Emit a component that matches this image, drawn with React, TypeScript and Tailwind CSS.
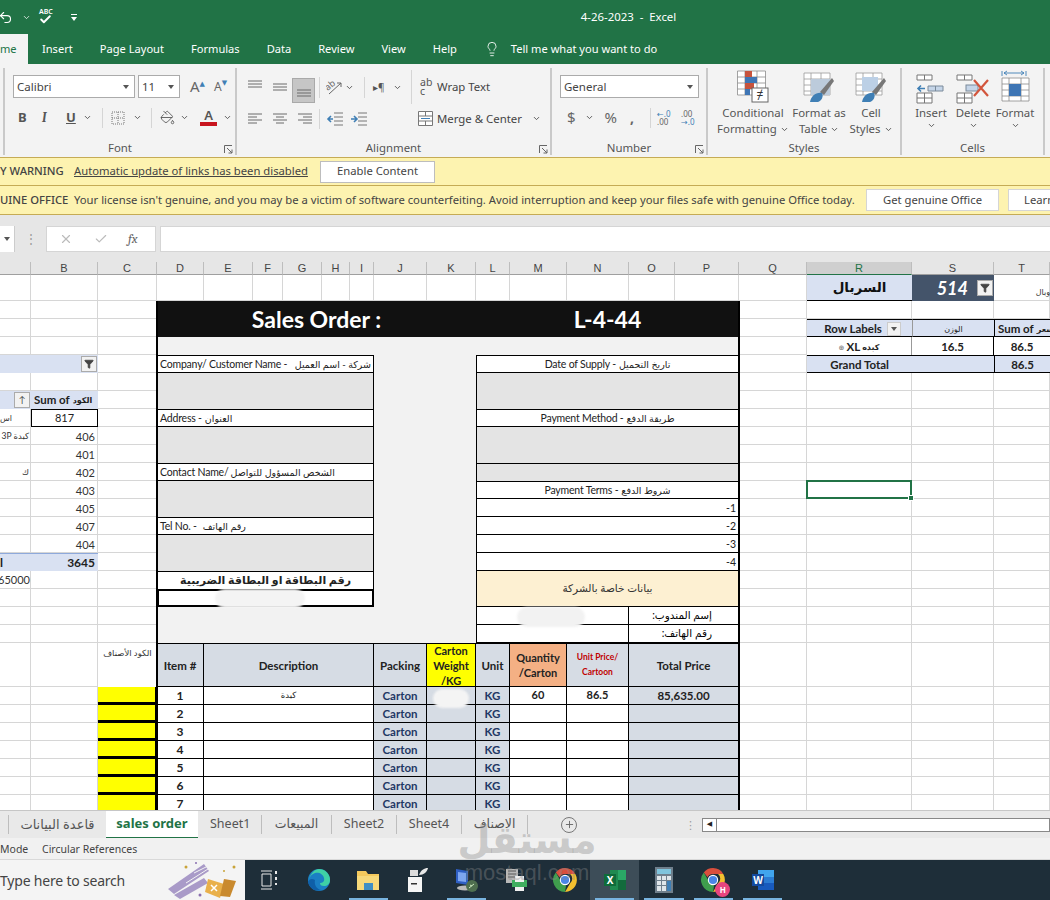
import type { ReactNode } from 'react'
import { Undo2, Lightbulb, ChevronDown, Check, X, Plus, PaintBucket, Filter } from 'lucide-react'

const UI = 'font-["Noto_Sans","DejaVu_Sans",sans-serif]'
const SHEET = 'font-["Lato","DejaVu_Sans",sans-serif]'

const COLUMNS = ['', 'B', 'C', 'D', 'E', 'F', 'G', 'H', 'I', 'J', 'K', 'L', 'M', 'N', 'O', 'P', 'Q', 'R', 'S', 'T']

function Chev({ className = '' }: { className?: string }) {
  return <ChevronDown size={9} strokeWidth={2.5} className={`text-[#555] shrink-0 ${className}`} />
}

function Caret() {
  return <span className="w-0 h-0 border-x-[3.5px] border-x-transparent border-t-[4px] border-t-[#555]" />
}

function Select({ label, className }: { label: string; className: string }) {
  return (
    <div className={`h-[23px] bg-white border border-[#ababab] flex items-center justify-between pl-[3px] pr-[5px] text-[11.5px] text-[#444] ${className}`}>
      {label}
      <Caret />
    </div>
  )
}

function Sep({ className = 'h-[20px]' }: { className?: string }) {
  return <div className={`w-px bg-[#d5d5d5] shrink-0 ${className}`} />
}

function Lines({ y, x }: { y: number[]; x: [number, number][] }) {
  return (
    <svg width="16" height="16" viewBox="0 0 16 16" className="shrink-0">
      {y.map((v, i) => (
        <line key={v} x1={x[i % x.length][0]} x2={x[i % x.length][1]} y1={v} y2={v} stroke="#6a6a6a" strokeWidth="1" />
      ))}
    </svg>
  )
}

function Launcher() {
  return (
    <svg width="9" height="9" viewBox="0 0 9 9" className="absolute right-[2px] bottom-[1px]">
      <path d="M0.5 8V0.5H8M3 3l5 5M8 4.5V8H4.5" fill="none" stroke="#666" strokeWidth="1" />
    </svg>
  )
}

function Group({ width, label, launcher, children }: { width: string; label: string; launcher?: boolean; children: ReactNode }) {
  return (
    <div className={`relative h-[87px] border-r-2 border-[#c9c9c9] shrink-0 flex flex-col ${width}`}>
      <div className="flex-1 min-h-0">{children}</div>
      <div className="text-center text-[11.4px] leading-[14px] text-[#555]">{label}</div>
      {launcher && <Launcher />}
    </div>
  )
}

function IndentIcon({ flip }: { flip?: boolean }) {
  return (
    <svg width="18" height="16" viewBox="0 0 18 16">
      <path d="M8 2h9M8 6h9M8 10h9M8 14h9" stroke="#777" strokeWidth="1" />
      <path d={flip ? 'M1 8h5M4 5l3 3-3 3' : 'M7 8H2M5 5L2 8l3 3'} stroke="#3f7fb5" strokeWidth="1.6" fill="none" />
    </svg>
  )
}

function OrientationIcon() {
  return (
    <svg width="17" height="17" viewBox="0 0 17 17" className="shrink-0">
      <text x="0" y="9" fontSize="9" fill="#666" transform="rotate(-40 5 8)">ab</text>
      <path d="M3 15L15 4M11 4h4v4" fill="none" stroke="#666" strokeWidth="1" />
    </svg>
  )
}

function ConditionalIcon() {
  return (
    <svg width="32" height="34" viewBox="0 0 32 34">
      <path d="M0.5 1h28v24h-28zM0.5 7h28M0.5 13h28M0.5 19h28M8 1v24M20 1v24" fill="#fff" stroke="#8b8b8b" strokeWidth="0.8" />
      <rect x="8" y="1" width="7" height="6" fill="#c7533d" />
      <rect x="8" y="7" width="12" height="6" fill="#3f76b5" />
      <rect x="8" y="13" width="9" height="6" fill="#c7533d" />
      <rect x="8" y="19" width="5" height="6" fill="#3f76b5" />
      <rect x="15" y="18" width="16" height="14" fill="#fff" stroke="#666" />
      <text x="23" y="29" textAnchor="middle" fontSize="12" fill="#333">≠</text>
    </svg>
  )
}

function BrushIcon({ table }: { table?: boolean }) {
  return (
    <svg width="32" height="34" viewBox="0 0 32 34">
      <path d="M1 3h26v22H1zM1 9h26M1 15h26M1 21h26M8 3v22M18 3v22" fill="#fff" stroke="#9a9a9a" strokeWidth="0.8" />
      {table ? <rect x="8" y="9" width="19" height="16" fill="#bccbdb" /> : <rect x="7" y="7" width="16" height="14" fill="#bcd0e6" />}
      <path d="M17 22L29 8l2 3-10 14z" fill="#777" />
      <path d="M7 32c1-6 6-10 12-9 2 4-1 8-4 9z" fill="#3f7fb5" />
    </svg>
  )
}

function InsertIcon() {
  return (
    <svg width="30" height="30" viewBox="0 0 30 30">
      <path d="M1 1h15v5H1zM8.5 1v5M1 19h15v10H1zM1 24h15M8.5 19v10" fill="#fff" stroke="#777" />
      <path d="M12 12h15v5H12zM19.5 12v5" fill="#c5d5e8" stroke="#7a8a9a" />
      <path d="M9 14.5H2M5 11.5l-3 3 3 3" fill="none" stroke="#3f7fb5" strokeWidth="1.6" />
    </svg>
  )
}

function DeleteIcon() {
  return (
    <svg width="34" height="30" viewBox="0 0 34 30">
      <path d="M1 1h15v5H1zM8.5 1v5M1 19h15v10H1zM1 24h15M8.5 19v10" fill="#fff" stroke="#777" />
      <rect x="10" y="11" width="12" height="6" fill="#c5d5e8" stroke="#7a8a9a" />
      <path d="M18 6l14 16M32 6L18 22" stroke="#d2553c" strokeWidth="2.2" />
    </svg>
  )
}

function FormatIcon() {
  return (
    <svg width="30" height="34" viewBox="0 0 30 34">
      <path d="M2 8h27v23H2zM2 14h27M2 20h27M2 26h27M9 8v23M21 8v23" fill="#fff" stroke="#8b8b8b" strokeWidth="0.8" />
      <rect x="9" y="14" width="12" height="12" fill="#3f76b5" />
      <path d="M2 1v5M26 1v5M4 3h20M7 1L4 3l3 2M21 1l3 2-3 2" fill="none" stroke="#3f7fb5" strokeWidth="0.9" />
    </svg>
  )
}

function StyleButton({ icon, top, bottom, width }: { icon: ReactNode; top: string; bottom?: string; width: string }) {
  return (
    <div className={`flex flex-col items-center shrink-0 ${width}`}>
      <div className="h-[36px] flex items-end">{icon}</div>
      <div className="mt-[1px] text-[11.4px] leading-[16px] text-[#555] whitespace-nowrap">{top}</div>
      <div className="text-[11.4px] leading-[16px] text-[#555] whitespace-nowrap flex items-center gap-[3px] justify-center">
        {bottom}
        <Chev />
      </div>
    </div>
  )
}

function Ribbon() {
  return (
    <div className={`${UI} h-[93px] bg-[#f3f3f3] flex pt-[4px] shrink-0 overflow-hidden`}>
      <div className="w-[5px] h-[87px] border-r-2 border-[#c9c9c9] shrink-0" />

      <Group width="w-[232px]" label="Font" launcher>
        <div className="flex items-center pl-[8px] pt-[7px]">
          <Select label="Calibri" className="w-[122px]" />
          <Select label="11" className="w-[42px] ml-[3px]" />
          <span className="ml-[10px] text-[15px] text-[#666] relative leading-none">A<sup className="text-[#3f7fb5] text-[7px] -top-[6px]">▲</sup></span>
          <span className="ml-[9px] text-[12px] text-[#666] relative leading-none">A<sup className="text-[#3f7fb5] text-[7px] -top-[6px]">▼</sup></span>
        </div>
        <div className="flex items-center pl-[13px] pt-[9px] h-[30px] text-[#555] text-[13px]">
          <span className="font-bold w-[24px]">B</span>
          <span className="italic font-serif font-bold w-[24px]">I</span>
          <span className="font-bold underline w-[17px]">U</span>
          <Chev />
          <Sep className="h-[20px] ml-[10px]" />
          <svg width="14" height="14" viewBox="0 0 14 14" className="ml-[8px]"><path d="M1 1h12v12H1zM7 1v12M1 7h12" fill="none" stroke="#777" strokeDasharray="1 1" /></svg>
          <Chev className="ml-[8px]" />
          <Sep className="h-[20px] ml-[9px]" />
          <PaintBucket size={15} strokeWidth={1.4} className="ml-[8px] text-[#555]" />
          <Chev className="ml-[5px]" />
          <span className="ml-[11px] flex flex-col items-center leading-none w-[17px] text-[13px] font-semibold"><span>A</span><span className="w-[17px] h-[4px] bg-[#c8141e]" /></span>
          <Chev className="ml-[6px]" />
        </div>
      </Group>

      <Group width="w-[315px]" label="Alignment" launcher>
        <div className="flex items-center pl-[10px] pt-[4px] h-[34px]">
          <Lines y={[2, 5, 8]} x={[[1, 15]]} />
          <div className="w-[9px]" />
          <Lines y={[5, 8, 11]} x={[[1, 15]]} />
          <div className="ml-[4px] mt-[6px] w-[23px] h-[25px] bg-[#c6c6c6] border border-[#a9a9a9] flex items-center justify-center shrink-0"><Lines y={[8, 11, 14]} x={[[1, 15]]} /></div>
          <Sep className="h-[21px] ml-[4px]" />
          <div className="ml-[6px]"><OrientationIcon /></div>
          <Chev className="ml-[2px]" />
          <Sep className="h-[21px] ml-[10px]" />
          <span className="ml-[8px] text-[10px] text-[#555] w-[14px]">▸¶</span>
          <Chev className="ml-[6px]" />
          <Sep className="h-[34px] ml-[9px]" />
          <span className="ml-[8px] text-[10.5px] leading-[9px] text-[#555] w-[14px]">ab<br />c</span>
          <span className="ml-[3px] text-[11.4px] text-[#444]">Wrap Text</span>
        </div>
        <div className="flex items-center pl-[10px] h-[25px] mt-[4px]">
          <Lines y={[3, 6, 9, 12]} x={[[1, 15], [1, 10]]} />
          <div className="w-[9px]" />
          <Lines y={[3, 6, 9, 12]} x={[[1, 15], [4, 12]]} />
          <div className="w-[9px]" />
          <Lines y={[3, 6, 9, 12]} x={[[1, 15], [6, 15]]} />
          <Sep className="h-[20px] ml-[6px]" />
          <div className="ml-[6px]"><IndentIcon /></div>
          <div className="ml-[6px]"><IndentIcon flip /></div>
          <div className="w-[50px]" />
          <svg width="15" height="15" viewBox="0 0 15 15"><path d="M0.5 0.5h14v14H0.5zM0.5 5h14M0.5 10h14M7.5 0.5V5M7.5 10v4.5" fill="#fff" stroke="#777" /><path d="M3 7.5h9" stroke="#3f7fb5" /></svg>
          <span className="ml-[4px] text-[11.4px] text-[#444] w-[94px]">Merge &amp; Center</span>
          <Chev className="ml-[1px]" />
        </div>
      </Group>

      <Group width="w-[156px]" label="Number" launcher>
        <div className="pl-[8px] pt-[7px]"><Select label="General" className="w-[139px]" /></div>
        <div className="flex items-center pl-[15px] pt-[9px] h-[30px] text-[#666]">
          <span className="text-[15px]">$</span>
          <Chev className="ml-[9px]" />
          <span className="ml-[11px] text-[15px]">%</span>
          <span className="ml-[13px] text-[14px] font-bold">,</span>
          <Sep className="h-[20px] ml-[16px]" />
          <span className="ml-[6px] text-[8px] leading-[8px] text-[#3f7fb5] w-[18px]">←.0<br /><span className="text-[#666]">.00</span></span>
          <span className="ml-[6px] text-[8px] leading-[8px] w-[18px]">.00<br /><span className="text-[#3f7fb5]">→.0</span></span>
        </div>
      </Group>

      <Group width="w-[194px]" label="Styles">
        <div className="flex pl-[6px]">
          <StyleButton icon={<ConditionalIcon />} top="Conditional" bottom="Formatting" width="w-[78px]" />
          <StyleButton icon={<BrushIcon table />} top="Format as" bottom="Table" width="w-[54px]" />
          <StyleButton icon={<BrushIcon />} top="Cell" bottom="Styles" width="w-[50px]" />
        </div>
      </Group>

      <Group width="w-[143px]" label="Cells">
        <div className="flex pl-[8px]">
          <StyleButton icon={<InsertIcon />} top="Insert" width="w-[42px]" />
          <StyleButton icon={<DeleteIcon />} top="Delete" width="w-[42px]" />
          <StyleButton icon={<FormatIcon />} top="Format" width="w-[42px]" />
        </div>
      </Group>
    </div>
  )
}

function Cell({ className = '', style, children }: { className?: string; style?: React.CSSProperties; children?: ReactNode }) {
  return (
    <div style={style} className={`flex items-center whitespace-nowrap overflow-hidden ${className}`}>
      {children}
    </div>
  )
}

const LABEL = 'border border-black bg-white text-[10.5px] tracking-[-0.2px] text-[#222] px-[2px] pt-[2px]'
const LINE = 'border-x border-b border-black bg-white text-[10.5px] text-[#222] px-[2px] pt-[2px]'
const GRAY = 'bg-[#e4e4e4] border-x border-black'

function LeftForm() {
  return (
    <>
      <Cell className={`col-[4/10] row-[6/7] ${LABEL} justify-between`}><span>Company/ Customer Name -</span><span dir="rtl" className="text-[9.5px]">شركة - اسم العميل</span></Cell>
      <Cell className={`col-[4/10] row-[7/9] ${GRAY}`} />
      <Cell className={`col-[4/10] row-[9/10] ${LABEL} gap-[3px]`}><span>Address -</span><span className="text-[9.5px]">العنوان</span></Cell>
      <Cell className={`col-[4/10] row-[10/12] ${GRAY}`} />
      <Cell className={`col-[4/10] row-[12/13] ${LABEL} gap-[2px]`}><span>Contact Name/</span><span className="text-[9.5px]">الشخص المسؤول للتواصل</span></Cell>
      <Cell className={`col-[4/10] row-[13/15] ${GRAY}`} />
      <Cell className={`col-[4/10] row-[15/16] ${LABEL} gap-[6px]`}><span>Tel No. -</span><span className="text-[9.5px]">رقم الهاتف</span></Cell>
      <Cell className={`col-[4/10] row-[16/18] ${GRAY}`} />
      <Cell className="col-[4/10] row-[18/19] border-x border-t border-black bg-white justify-center font-bold text-[11px] text-[#222]"><span>رقم البطاقة او البطاقة الضريبية</span></Cell>
      <Cell className="col-[4/10] row-[19/20] border-2 border-black bg-white" />
    </>
  )
}

function RightForm() {
  return (
    <>
      <Cell className={`col-[12/17] row-[6/7] ${LABEL} justify-center gap-[3px]`}><span>Date of Supply -</span><span className="text-[9.5px]">تاريخ التحميل</span></Cell>
      <Cell className={`col-[12/17] row-[7/9] ${GRAY}`} />
      <Cell className={`col-[12/17] row-[9/10] ${LABEL} justify-center gap-[3px]`}><span>Payment Method -</span><span className="text-[9.5px]">طريقة الدفع</span></Cell>
      <Cell className={`col-[12/17] row-[10/12] ${GRAY}`} />
      <Cell className={`col-[12/17] row-[12/13] ${GRAY} border-t`} />
      <Cell className={`col-[12/17] row-[13/14] ${LABEL} justify-center gap-[3px]`}><span>Payment Terms -</span><span className="text-[9.5px]">شروط الدفع</span></Cell>
      <Cell className={`col-[12/17] row-[14/15] ${LINE} justify-end`}>-1</Cell>
      <Cell className={`col-[12/17] row-[15/16] ${LINE} justify-end`}>-2</Cell>
      <Cell className={`col-[12/17] row-[16/17] ${LINE} justify-end`}>-3</Cell>
      <Cell className={`col-[12/17] row-[17/18] ${LINE} justify-end`}>-4</Cell>
      <Cell className="col-[12/17] row-[18/20] bg-[#fdf0d2] border-x border-b border-black justify-center text-[10.5px] text-[#333]"><span dir="rtl">بيانات خاصة بالشركة</span></Cell>
      <Cell className="col-[12/15] row-[20/21] bg-white border-l border-r border-b border-black" />
      <Cell className="col-[15/17] row-[20/21] bg-white border-r border-b border-black justify-end pr-[26px] text-[10.5px]"><span dir="rtl">إسم المندوب:</span></Cell>
      <Cell className="col-[12/15] row-[21/22] bg-white border-l border-r border-b border-black" />
      <Cell className="col-[15/17] row-[21/22] bg-white border-r border-b border-black justify-end pr-[26px] text-[10.5px]"><span dir="rtl">رقم الهاتف:</span></Cell>
    </>
  )
}

function ItemTable() {
  const body = 'border-r border-b border-black justify-center font-bold'
  const blue = `${body} bg-[#d6dce4]`
  const plain = `${body} bg-white text-[#222]`
  const head = 'row-[22/23] border-r border-y border-black justify-center text-center font-bold leading-[15px]'
  return (
    <>
      <Cell className="col-[3/4] row-[22/23] bg-white items-start justify-center pt-[4px] text-[8.5px] text-[#333]"><span dir="rtl">الكود الأصناف</span></Cell>
      <Cell className={`col-[4/5] ${head} bg-[#d6dce4] text-[11.5px] text-[#222]`}>Item #</Cell>
      <Cell className={`col-[5/10] ${head} bg-[#d6dce4] text-[11.5px] text-[#222]`}>Description</Cell>
      <Cell className={`col-[10/11] ${head} bg-[#d6dce4] text-[11.5px] text-[#222]`}>Packing</Cell>
      <Cell className={`col-[11/12] ${head} bg-[#ffff00] text-[11px] text-[#222]`}><span>Carton<br />Weight<br />/KG</span></Cell>
      <Cell className={`col-[12/13] ${head} bg-[#d6dce4] text-[11.5px] text-[#222]`}>Unit</Cell>
      <Cell className={`col-[13/14] ${head} bg-[#f4b084] text-[11px] text-[#222]`}><span>Quantity<br />/Carton</span></Cell>
      <Cell className={`col-[14/15] ${head} bg-[#d6dce4] text-[8.5px] text-[#c00000]`}><span>Unit Price/<br />Cartoon</span></Cell>
      <Cell className={`col-[15/17] ${head} bg-[#d6dce4] text-[11.5px] text-[#222]`}>Total Price</Cell>
      {[1, 2, 3, 4, 5, 6, 7].map((n, i) => {
        const row = { gridRow: 23 + i }
        return (
          <div key={n} className="contents">
            <Cell style={row} className="col-[3/4] bg-[#ffff00] border-b-[3px] border-r-2 border-black" />
            <Cell style={row} className={`col-[4/5] ${plain} text-[12px]`}>{n}</Cell>
            <Cell style={row} className="col-[5/10] border-r border-b border-black justify-center bg-white text-[#222] text-[8.5px]">{n === 1 ? 'كبدة' : ''}</Cell>
            <Cell style={row} className={`col-[10/11] ${blue} text-[11.5px] text-[#1f3864]`}>Carton</Cell>
            <Cell style={row} className={`col-[11/12] ${blue}`} />
            <Cell style={row} className={`col-[12/13] ${blue} text-[11.5px] text-[#1f3864]`}>KG</Cell>
            <Cell style={row} className={`col-[13/14] ${plain} text-[11px]`}>{n === 1 ? '60' : ''}</Cell>
            <Cell style={row} className={`col-[14/15] ${plain} text-[11px]`}>{n === 1 ? '86.5' : ''}</Cell>
            <Cell style={row} className={`col-[15/17] ${blue} text-[11.5px] text-[#222]`}>{n === 1 ? '85,635.00' : ''}</Cell>
          </div>
        )
      })}
    </>
  )
}

function LeftPivot() {
  const values: [string, string][] = [
    ['3P كبدة', '406'],
    ['', '401'],
    ['ك', '402'],
    ['', '403'],
    ['', '405'],
    ['', '407'],
    ['', '404']
  ]
  return (
    <>
      <Cell className="col-[1/3] row-[6/7] bg-[#d9e1f2] justify-end pr-[1px]">
        <span className="w-[16px] h-[16px] bg-[#f2f2f2] border border-[#ababab] flex items-center justify-center"><Filter size={10} fill="#444" stroke="#444" /></span>
      </Cell>
      <Cell className="col-[1/2] row-[8/9] bg-[#d9e1f2] justify-end pr-[1px] text-[11px]">
        <span className="w-[16px] h-[16px] bg-[#f2f2f2] border border-[#ababab] flex items-center justify-center text-[9px] text-[#444]">↑</span>
      </Cell>
      <Cell className="col-[2/3] row-[8/9] bg-[#d9e1f2] font-bold text-[11.5px] pl-[3px] gap-[3px] text-[#222]">Sum of <span className="text-[8px]">الكود</span></Cell>
      <Cell className="col-[2/3] row-[9/10] border border-black justify-center text-[11px] text-[#222] pt-[1px]">817</Cell>
      <Cell className="col-[1/2] row-[9/10] justify-start text-[8px] text-[#333]">اس</Cell>
      {values.map(([label, value], i) => {
        const row = { gridRow: 10 + i }
        return (
          <div key={value} className="contents">
            <Cell style={row} className="col-[1/2] justify-end pr-[2px] text-[8.5px] text-[#333]">{label}</Cell>
            <Cell style={row} className="col-[2/3] justify-end pr-[3px] pt-[2px] text-[11px] text-[#333]">{value}</Cell>
          </div>
        )
      })}
      <Cell className="col-[1/3] row-[17/18] bg-[#d9e1f2] border-t border-[#8ea9db] justify-between font-bold text-[12px] text-[#222] pr-[3px]"><span>l</span><span>3645</span></Cell>
      <Cell className="col-[1/2] row-[18/19] justify-end text-[11px] text-[#333] pr-[1px]">65000</Cell>
    </>
  )
}

function RightPivot() {
  const band = 'bg-[#d9e1f2] border-y border-black justify-center text-[#222] pt-[1px]'
  const value = 'bg-white justify-center font-bold text-[11.5px] text-[#222] pt-[2px]'
  return (
    <>
      <Cell className="col-[18/19] row-[2/3] bg-[#d9e1f2] border-b border-black justify-center font-semibold text-[13.5px] text-[#111]"><span dir="rtl">السربال</span></Cell>
      <Cell className="col-[19/20] row-[2/3] bg-[#44546a] justify-end pr-[1px] gap-[9px]">
        <span className="text-white font-bold italic text-[18px]">514</span>
        <span className="w-[16px] h-[16px] bg-[#f2f2f2] border border-[#ababab] flex items-center justify-center"><Filter size={10} fill="#444" stroke="#444" /></span>
      </Cell>
      <Cell className="col-[20/21] row-[2/3] items-end justify-end pb-[3px] text-[8px] text-[#333]">وبال</Cell>
      <Cell className={`col-[18/19] row-[4/5] ${band} font-bold text-[11.5px] pl-[6px] gap-[5px]`}>Row Labels<span className="w-[14px] h-[14px] bg-[#f2f2f2] border border-[#ccc] flex items-center justify-center"><Caret /></span></Cell>
      <Cell className={`col-[19/20] row-[4/5] ${band} text-[8px] border-l border-l-[#999]`}>الوزن</Cell>
      <Cell className={`col-[20/21] row-[4/5] ${band} font-bold text-[11.5px] border-l border-l-black justify-start pl-[3px] gap-[3px]`}>Sum of <span className="text-[8px]">السعر</span></Cell>
      <Cell className={`col-[18/19] row-[5/6] ${value} gap-[2px] border-r border-[#999]`}><span className="text-[7px] text-[#888]">⊕</span>XL <span className="text-[8px]">كبده</span></Cell>
      <Cell className={`col-[19/20] row-[5/6] ${value} border-r border-black`}>16.5</Cell>
      <Cell className={`col-[20/21] row-[5/6] ${value}`}>86.5</Cell>
      <Cell className={`col-[18/19] row-[6/7] ${band} font-bold text-[11.5px]`}>Grand Total</Cell>
      <Cell className={`col-[19/20] row-[6/7] ${band}`} />
      <Cell className={`col-[20/21] row-[6/7] ${band} font-bold text-[11.5px] border-l border-l-black`}>86.5</Cell>
      <div className="col-[18/19] row-[13/14] border-2 border-[#217346] relative -ml-px -mt-px">
        <span className="absolute -right-[4px] -bottom-[4px] w-[6px] h-[6px] bg-[#217346] border border-white" />
      </div>
    </>
  )
}

function Sheet() {
  const rows = Array.from({ length: 28 }, (_, i) => i + 2)
  return (
    <div className={`${SHEET} relative h-[548px] overflow-hidden bg-white shrink-0`}>
      <div className="grid grid-cols-[31px_67px_59px_47px_49px_30px_39px_28px_24px_53px_49px_34px_57px_62px_46px_64px_68px_105px_82px_56px] grid-rows-[13px_26px_repeat(19,18px)_44px_repeat(7,18px)]">
        {COLUMNS.map((c, i) => (
          <div
            key={i}
            style={{ gridRow: 1, gridColumn: i + 1 }}
            className={`font-["Liberation_Sans",sans-serif] flex items-center justify-center text-[11px] leading-none border-b border-r border-r-[#bdbdbd] ${c === 'R' ? 'bg-[#cfcfcf] text-[#217346] border-b-[#217346]' : 'bg-[#e6e6e6] text-[#444] border-b-[#9f9f9f]'}`}
          >
            {c}
          </div>
        ))}
        {rows.map(r =>
          COLUMNS.map((_, c) => (
            <div key={`${r}-${c}`} style={{ gridRow: r, gridColumn: c + 1 }} className="border-r border-b border-[#d6d6d6]" />
          ))
        )}

        <div className="col-[4/17] row-[5/24] bg-[#f2f2f2]" />
        <Cell className="col-[4/12] row-[3/5] bg-[#111] justify-center text-white font-bold text-[23px]">Sales Order :</Cell>
        <Cell className="col-[12/17] row-[3/5] bg-[#111] justify-center text-white font-bold text-[23px]">L-4-44</Cell>
        <LeftForm />
        <RightForm />
        <ItemTable />
        <LeftPivot />
        <RightPivot />
        <div className="col-[4/5] row-[3/31] border-l-2 border-black -ml-px" />
        <div className="col-[16/17] row-[3/31] border-r-2 border-black -mr-px" />
      </div>
      {/* blanked out bits of the picture */}
      <div className="absolute left-[215px] top-[327px] w-[90px] h-[19px] rounded-full bg-[#f4f4f4] blur-[1px]" />
      <div className="absolute left-[517px] top-[345px] w-[68px] h-[20px] rounded-full bg-[#f2f2f2] blur-[1px]" />
      <div className="absolute left-[433px] top-[427px] w-[36px] h-[19px] rounded-full bg-[#f4f4f4] blur-[1px]" />
    </div>
  )
}

function Tabs() {
  const tab = 'flex items-center border-r border-[#bdbdbd] h-[19px] text-[12.5px] text-[#555] whitespace-nowrap'
  return (
    <div className={`${UI} h-[28px] bg-[#e9e9e9] border-t border-[#c6c6c6] flex items-center shrink-0 overflow-hidden`}>
      <div className="w-[9px] h-[19px] border-r border-[#bdbdbd] shrink-0" />
      <div className="w-[97px] text-center text-[13px] text-[#555]" dir="rtl">قاعدة البيانات</div>
      <div className="w-[92px] h-[28px] bg-white border-b-2 border-[#217346] flex items-center justify-center font-bold text-[#217346] text-[13px]">sales order</div>
      <div className={`${tab} pl-[12px] w-[64px]`}>Sheet1</div>
      <div className={`${tab} w-[70px] justify-center`} dir="rtl">المبيعات</div>
      <div className={`${tab} w-[65px] justify-center`}>Sheet2</div>
      <div className={`${tab} w-[65px] justify-center`}>Sheet4</div>
      <div className={`${tab} w-[66px] justify-center`} dir="rtl">الاصناف</div>
      <div className="ml-[33px] w-[16px] h-[16px] rounded-full border border-[#777] flex items-center justify-center shrink-0"><Plus size={11} className="text-[#666]" /></div>
      <div className="ml-[108px] text-[#999] text-[11px] leading-[5px] w-[10px]">⋮</div>
      <div className="ml-[7px] flex-1 h-[14px] bg-white border border-[#888] flex items-center">
        <span className="w-[14px] h-full border-r border-[#888] flex items-center justify-center text-[7px] text-[#222]">◀</span>
      </div>
    </div>
  )
}

function Edge() {
  return (
    <svg width="24" height="26" viewBox="0 0 24 24">
      <circle cx="12" cy="12" r="11" fill="#1b7fc4" />
      <path d="M12 1a11 11 0 0 1 11 11c0 4-3 6-6 6-3 0-4-1-4-3 2 0 5-1 4-5-1-4-5-6-9-5-3 1-5 3-6 6C4 5 8 1 12 1z" fill="#3fd0a5" />
      <path d="M8 12c-1 4 1 9 6 10-6 2-12-2-13-8 1-3 4-4 7-2z" fill="#0f5fa8" />
    </svg>
  )
}

function ChromeLogo({ size = 26 }: { size?: number }) {
  return (
    <svg width={size} height={size} viewBox="0 0 24 24">
      <path d="M12 1a11 11 0 0 1 9.5 5.5H12a5.5 5.5 0 0 0-5 3L3.500 5A11 11 0 0 1 12 1z" fill="#d94f3d" />
      <path d="M21.500 6.500A11 11 0 0 1 12 23l4.700-8a5.500 5.500 0 0 0 0-8.500z" fill="#f3c02f" />
      <path d="M12 23A11 11 0 0 1 3.500 5L8 13a5.500 5.500 0 0 0 5 4z" fill="#3f9e4d" />
      <circle cx="12" cy="12" r="4.800" fill="#fff" />
      <circle cx="12" cy="12" r="3.800" fill="#4a86e8" />
    </svg>
  )
}

function Taskbar() {
  const icons: { key: string; node: ReactNode; open?: boolean; active?: boolean }[] = [
    {
      key: 'view',
      node: (
        <svg width="17" height="20" viewBox="0 0 17 20"><path d="M0 1h11M0 19h11M1 4h9v12H1z" fill="none" stroke="#e8e8e8" /><path d="M14 1h2v3h-2zM14 7h2v3h-2zM14 13h2v2h-2z" fill="#e8e8e8" /></svg>
      )
    },
    { key: 'edge', node: <Edge /> },
    {
      key: 'folder',
      open: true,
      node: (
        <svg width="24" height="24" viewBox="0 0 24 24"><path d="M1 3h9l2 3h11v16H1z" fill="#f4c95d" /><path d="M1 8h22v14H1z" fill="#f7d97a" /><rect x="8" y="15" width="9" height="7" fill="#3f8fc4" /></svg>
      )
    },
    {
      key: 'office',
      node: (
        <svg width="24" height="26" viewBox="0 0 24 26"><path d="M2 10h14v15H2z" fill="#f5f5f5" /><path d="M4 3h8v6H4z" fill="#ddd" /><path d="M13 8c2-5 5-7 9-7-1 4-4 7-9 7z" fill="#e8e8e8" /><rect x="5" y="16" width="6" height="1.500" fill="#333" /></svg>
      )
    },
    {
      key: 'monitor',
      open: true,
      node: (
        <svg width="26" height="26" viewBox="0 0 26 26"><path d="M2 2l12 2v14L2 16z" fill="#2f5fc4" /><path d="M4 5l8 1v9l-8-1z" fill="#7ea6f0" /><ellipse cx="11" cy="21" rx="8" ry="2.500" fill="#bbb" /><circle cx="18" cy="19" r="6" fill="#4f6f4f" /><path d="M15 21l5-4M16 18l2 1" stroke="#cdeac0" /></svg>
      )
    },
    {
      key: 'printer',
      node: (
        <svg width="26" height="26" viewBox="0 0 26 26"><path d="M3 2h12v14H3z" fill="#b9b9b9" /><path d="M5 4h8M5 7h8M5 10h8" stroke="#555" /><path d="M9 13h15v7H9z" fill="#3fae5f" /><path d="M12 9h9v6h-9zM12 20h9v4h-9z" fill="#f0f0f0" /></svg>
      )
    },
    { key: 'chrome', node: <ChromeLogo /> },
    {
      key: 'excel',
      open: true,
      active: true,
      node: (
        <svg width="24" height="24" viewBox="0 0 24 24"><rect x="7" y="2" width="16" height="20" fill="#1f8a50" /><rect x="15" y="2" width="8" height="10" fill="#2aa866" /><rect x="15" y="12" width="8" height="10" fill="#136b3c" /><rect x="1" y="6" width="12" height="12" fill="#0f6b3a" /><text x="7" y="15.500" textAnchor="middle" fontSize="10" fontWeight="bold" fill="#fff">X</text></svg>
      )
    },
    {
      key: 'calc',
      open: true,
      node: (
        <svg width="18" height="26" viewBox="0 0 18 26"><rect width="18" height="26" fill="#6f7f8c" /><rect x="2" y="2" width="14" height="5" fill="#7fc4dc" /><path d="M2 9h4v4H2zM7 9h4v4H7zM12 9h4v4h-4zM2 14h4v4H2zM7 14h4v4H7zM2 19h4v5H2zM7 19h4v5H7z" fill="#dfe6ea" /><rect x="12" y="14" width="4" height="10" fill="#3f7fb5" /></svg>
      )
    },
    {
      key: 'profile',
      open: true,
      node: (
        <span className="relative inline-flex">
          <ChromeLogo />
          <span className="absolute -right-[4px] -bottom-[4px] w-[15px] h-[15px] rounded-full bg-[#e8457f] text-white text-[8px] font-bold flex items-center justify-center">H</span>
        </span>
      )
    },
    {
      key: 'word',
      open: true,
      node: (
        <svg width="24" height="24" viewBox="0 0 24 24"><rect x="7" y="2" width="16" height="20" fill="#2b7cd3" /><rect x="7" y="2" width="16" height="7" fill="#41a5ee" /><rect x="7" y="15" width="16" height="7" fill="#185abd" /><rect x="1" y="6" width="12" height="12" fill="#144a9e" /><text x="7" y="15.500" textAnchor="middle" fontSize="10" fontWeight="bold" fill="#fff">W</text></svg>
      )
    }
  ]
  return (
    <div className="h-[40px] flex shrink-0">
      <div className={`${UI} w-[245px] bg-[#f4f4f4] flex items-center justify-between text-[#444] text-[14px] overflow-hidden pr-[3px]`}>
        <span className="whitespace-nowrap -tracking-[0.2px]">Type here to search</span>
        <svg width="76" height="38" viewBox="0 0 76 38">
          <path d="M2 28L38 3l5 7L8 33zM8 34l30-17 4 5L14 38z" fill="#a99ac8" />
          <path d="M28 12l18-9M20 22l22-14" stroke="#f4f4f4" />
          <path d="M42 18l16 5-4 14-15-6z" fill="#e9b04a" />
          <path d="M58 18l12 2-6 16-10-1z" fill="#c98a2e" />
          <path d="M45 24l6 6M51 24l-6 6" stroke="#fff" strokeWidth="1.500" />
          <circle cx="20" cy="6" r="1.500" fill="#c9a43a" /><circle cx="30" cy="2" r="1" fill="#8a6fb0" /><circle cx="68" cy="6" r="1.500" fill="#c9a43a" /><circle cx="58" cy="10" r="1" fill="#c9a43a" /><circle cx="34" cy="34" r="1.500" fill="#8a6fb0" />
        </svg>
      </div>
      <div className="flex-1 bg-[#1e2e39] flex items-stretch">
        {icons.map(i => (
          <div key={i.key} className={`relative w-[49.300px] flex items-center justify-center ${i.active ? 'bg-[#3d4d58]' : ''}`}>
            {i.node}
            {i.open && <span className="absolute left-[5px] right-[5px] bottom-0 h-[2px] bg-[#78b4e0]" />}
          </div>
        ))}
      </div>
    </div>
  )
}

export default function App() {
  const tabs = ['Insert', 'Page Layout', 'Formulas', 'Data', 'Review', 'View', 'Help']
  return (
    <div className="relative w-[1050px] h-[900px] overflow-hidden flex flex-col bg-white">
      {/* title bar */}
      <div className={`${UI} h-[34px] bg-[#217346] flex items-center text-white shrink-0`}>
        <Undo2 size={15} strokeWidth={1.8} className="-ml-[2px]" />
        <ChevronDown size={9} className="ml-[9px]" />
        <span className="ml-[8px] flex flex-col items-center leading-none">
          <span className="text-[7px] font-semibold">ABC</span>
          <Check size={13} strokeWidth={3.5} className="-mt-[2px]" />
        </span>
        <span className="ml-[18px] text-[10px] leading-none flex flex-col items-center"><span className="w-[6px] h-px bg-white mb-[2px]" /><span className="w-0 h-0 border-x-[3px] border-x-transparent border-t-[4px] border-t-white" /></span>
        <span className="ml-[504px] text-[11.4px] whitespace-pre">4-26-2023  -  Excel</span>
      </div>
      <div className={`${UI} h-[30px] bg-[#217346] flex items-stretch text-white text-[11.1px] shrink-0`}>
        <div className="w-[28px] bg-[#f3f3f3] text-[#217346] flex items-center">me</div>
        <div className="flex items-center gap-[27px] ml-[14px]">
          {tabs.map(t => <span key={t} className="whitespace-nowrap">{t}</span>)}
        </div>
        <Lightbulb size={16} strokeWidth={1.3} className="self-center ml-[27px]" />
        <span className="self-center ml-[11px]">Tell me what you want to do</span>
      </div>

      <Ribbon />

      {/* message bars */}
      <div className={`${UI} h-[29px] bg-[#fdf3b0] border-y border-[#c5ab55] flex items-center text-[11.25px] text-[#444] shrink-0 whitespace-nowrap`}>
        <span className="w-[74px] font-medium">Y WARNING</span>
        <span className="underline w-[246px]">Automatic update of links has been disabled</span>
        <span className="w-[115px] h-[22px] bg-white border border-[#bdbdbd] flex items-center justify-center">Enable Content</span>
      </div>
      <div className={`${UI} h-[29px] bg-[#fdf3b0] border-b border-[#c5ab55] flex items-center text-[11.25px] text-[#444] shrink-0 whitespace-nowrap overflow-hidden`}>
        <span className="w-[74px] font-medium shrink-0">UINE OFFICE</span>
        <span className="w-[792px] shrink-0">Your license isn't genuine, and you may be a victim of software counterfeiting. Avoid interruption and keep your files safe with genuine Office today.</span>
        <span className="w-[133px] h-[22px] bg-white border border-[#d5d5d5] flex items-center justify-center shrink-0">Get genuine Office</span>
        <span className="ml-[9px] w-[60px] h-[22px] bg-white border border-[#d5d5d5] flex items-center pl-[15px] shrink-0">Learn more</span>
      </div>

      {/* formula bar */}
      <div className="h-[47px] bg-[#e6e6e6] pt-[11px] shrink-0">
        <div className="h-[26px] flex items-stretch">
          <div className="w-[15px] bg-white border-r border-[#ccc] flex items-center justify-center"><Caret /></div>
          <div className="w-[31px] flex items-center justify-center text-[#999] text-[12px]">⋮</div>
          <div className="w-[110px] bg-white border border-[#d5d5d5] flex items-center text-[#bbb] pl-[12px]">
            <X size={14} />
            <Check size={14} className="ml-[21px]" />
            <span className="ml-[20px] font-serif italic text-[13px] text-[#666]">fx</span>
          </div>
          <div className="ml-[4px] flex-1 bg-white border-y border-l border-[#d5d5d5]" />
        </div>
      </div>

      <Sheet />
      <Tabs />
      <div className={`${UI} h-[22px] bg-[#f1f1f1] border-b border-[#d9d9d9] flex items-center pt-[3px] text-[10.500px] text-[#444] shrink-0 whitespace-nowrap`}>
        <span className="w-[42px]">Mode</span>
        <span>Circular References</span>
      </div>
      <Taskbar />

      {/* mostaql watermark */}
      <div className="absolute left-[462px] top-[818px] w-[130px] flex flex-col items-center pointer-events-none text-[#8a8a8a]/40">
        <span className={`font-["DejaVu_Sans",sans-serif] font-bold text-[38px] leading-[44px]`} dir="rtl">مستقل</span>
        <span className={`font-["Liberation_Sans",sans-serif] text-[22px] leading-[22px]`}>mostaql.com</span>
      </div>
    </div>
  )
}
